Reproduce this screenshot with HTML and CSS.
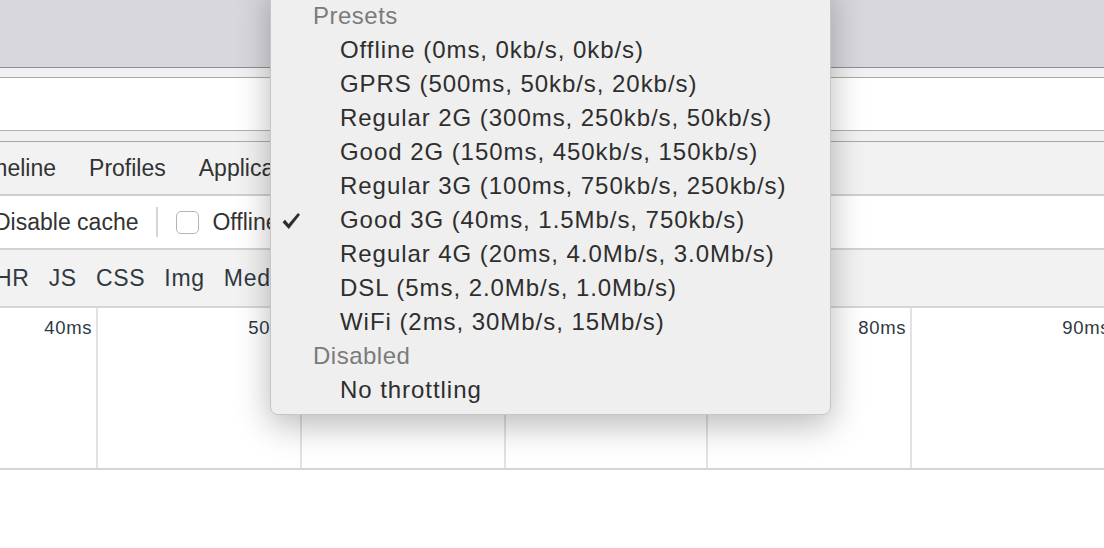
FILE: index.html
```html
<!DOCTYPE html>
<html>
<head>
<meta charset="utf-8">
<link rel="stylesheet" href="styles.css">
</head>
<body>
<div class="page">
  <div class="titlebar"></div>
  <div class="strip"></div>
  <div class="addr"></div>
  <div class="strip strip2"></div>
  <div class="tabs">
    <span class="tab">Timeline</span>
    <span class="tab">Profiles</span>
    <span class="tab">Application</span>
  </div>
  <div class="toolbar">
    <span class="tool">Disable cache</span>
    <span class="sep"></span>
    <span class="check"></span>
    <span class="tool">Offline</span>
  </div>
  <div class="filters">
    <span class="filter">XHR</span>
    <span class="filter">JS</span>
    <span class="filter">CSS</span>
    <span class="filter">Img</span>
    <span class="filter">Media</span>
  </div>
  <div class="timeline">
    <div class="col">40ms</div>
    <div class="col">50ms</div>
    <div class="col">60ms</div>
    <div class="col">70ms</div>
    <div class="col">80ms</div>
    <div class="col">90ms</div>
  </div>

  <div class="menu">
    <div class="head">Presets</div>
    <div class="item">Offline (0ms, 0kb/s, 0kb/s)</div>
    <div class="item">GPRS (500ms, 50kb/s, 20kb/s)</div>
    <div class="item">Regular 2G (300ms, 250kb/s, 50kb/s)</div>
    <div class="item">Good 2G (150ms, 450kb/s, 150kb/s)</div>
    <div class="item">Regular 3G (100ms, 750kb/s, 250kb/s)</div>
    <div class="item checked"><svg class="tick" width="20" height="18" viewBox="0 0 20 18"><path d="M1.5 10.2 L4 7.8 L7.6 12 L17 1 L19 2.8 L7.8 17 Z" fill="#2e2e2e"/></svg>Good 3G (40ms, 1.5Mb/s, 750kb/s)</div>
    <div class="item">Regular 4G (20ms, 4.0Mb/s, 3.0Mb/s)</div>
    <div class="item">DSL (5ms, 2.0Mb/s, 1.0Mb/s)</div>
    <div class="item">WiFi (2ms, 30Mb/s, 15Mb/s)</div>
    <div class="head">Disabled</div>
    <div class="item">No throttling</div>
  </div>
</div>
</body>
</html>
```

FILE: styles.css
```css
* { box-sizing: border-box; }
html, body { margin: 0; padding: 0; }
body {
  width: 1104px;
  height: 548px;
  overflow: hidden;
  background: #fff;
  font-family: "Liberation Sans", Arial, sans-serif;
}
.page {
  position: relative;
  width: 1104px;
  height: 548px;
  overflow: hidden;
}
.titlebar {
  height: 68px;
  background: #d8d7dd;
  border-bottom: 1px solid #8e8e93;
}
.strip {
  height: 10px;
  background: #f1f1f1;
  border-bottom: 1px solid #a9a9a9;
}
.addr {
  height: 53px;
  background: #fff;
  border-bottom: 1px solid #b0b0b0;
}
.strip2 { height: 11px; }
.tabs {
  height: 54px;
  background: #f2f2f2;
  border-bottom: 2px solid #cfcfcf;
  display: flex;
  align-items: center;
  gap: 33px;
  margin-left: -30px;
  font-size: 23px;
  color: #333;
}
.toolbar {
  height: 54px;
  background: #fff;
  border-bottom: 2px solid #d2d2d2;
  display: flex;
  align-items: center;
  margin-left: -6px;
  font-size: 23px;
  color: #333;
}
.sep {
  width: 2px;
  height: 30px;
  background: #d6d6d6;
  margin: 0 18px 0 18px;
}
.check {
  width: 23px;
  height: 23px;
  border: 1px solid #b5b5b5;
  border-radius: 5px;
  background: #fff;
  margin-right: 13px;
}
.filters {
  height: 58px;
  background: #f2f2f2;
  border-bottom: 2px solid #d6d6d6;
  display: flex;
  align-items: center;
  gap: 19px;
  margin-left: -21px;
  font-size: 23px;
  letter-spacing: 0.7px;
  color: #303942;
}
.timeline {
  height: 162px;
  background: #fff;
  border-bottom: 2px solid #d5d5d5;
  display: grid;
  grid-template-columns: 98px 204px 204px 202px 204px 204px;
  font-size: 18.5px;
  letter-spacing: 0.6px;
  color: #303942;
}
.col {
  border-right: 2px solid #e2e2e2;
  text-align: right;
  padding: 9px 4px 0 0;
}
.menu {
  position: absolute;
  left: 270px;
  top: -20px;
  width: 561px;
  height: 435px;
  background: #efefef;
  border: 1px solid #c6c6c6;
  border-radius: 8px;
  box-shadow: 0 10px 34px rgba(0,0,0,0.28);
  padding-top: 18px;
  font-size: 24px;
  letter-spacing: 0.95px;
  color: #2e2e2e;
}
.head {
  height: 34px;
  line-height: 34px;
  padding-left: 42px;
  color: #7b7b7b;
  letter-spacing: 0.5px;
}
.item {
  position: relative;
  height: 34px;
  line-height: 33px;
  padding-left: 69px;
}
.tick {
  position: absolute;
  left: 10px;
  top: 9px;
}
```
